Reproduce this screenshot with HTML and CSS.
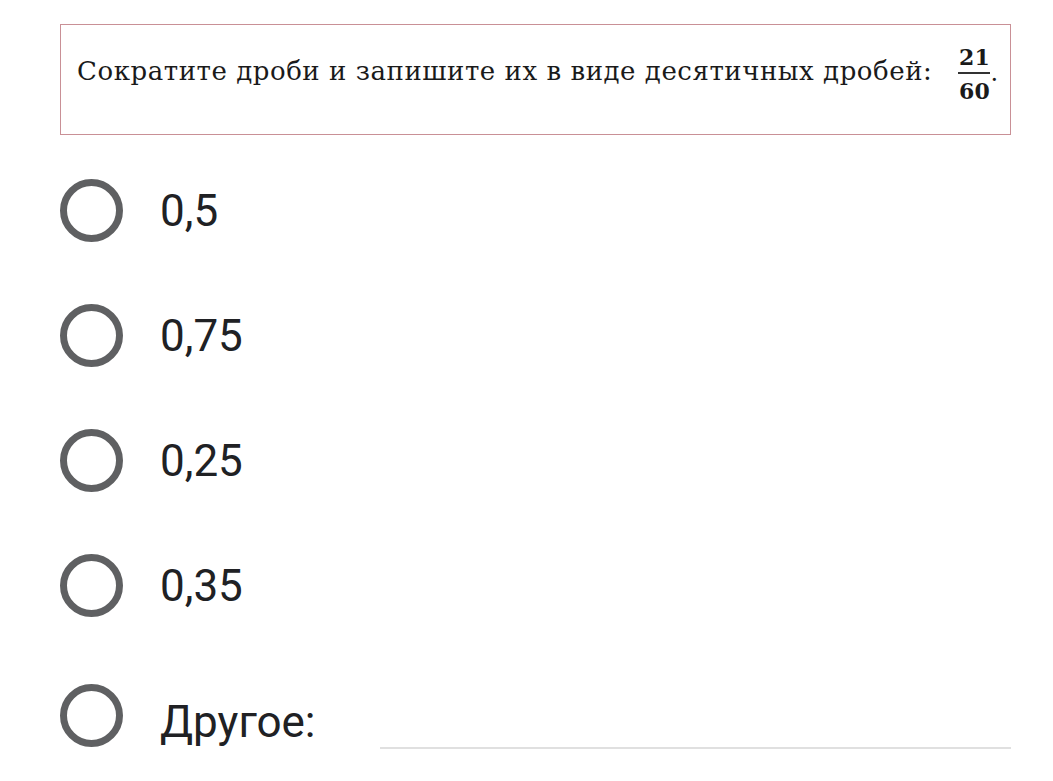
FILE: index.html
```html
<!DOCTYPE html>
<html lang="ru">
<head>
<meta charset="utf-8">
<link rel="stylesheet" href="styles.css">
</head>
<body>
<div class="question">
  <span class="qtext">Сократите дроби и запишите их в виде десятичных дробей:</span>
  <span class="frac"><span class="num">21</span><span class="bar"></span><span class="den">60</span></span><span class="dot">.</span>
</div>
<div class="options">
  <div class="option"><span class="radio"></span><span class="label">0,5</span></div>
  <div class="option"><span class="radio"></span><span class="label">0,75</span></div>
  <div class="option"><span class="radio"></span><span class="label">0,25</span></div>
  <div class="option"><span class="radio"></span><span class="label">0,35</span></div>
  <div class="option other"><span class="radio"></span><span class="label">Другое:</span><span class="other-line"></span></div>
</div>
</body>
</html>
```
FILE: styles.css
```css
html, body {
  margin: 0;
  padding: 0;
  background: #ffffff;
}
body {
  width: 1053px;
  height: 781px;
  overflow: hidden;
}
.question {
  box-sizing: border-box;
  margin: 24px 0 0 60px;
  width: 951px;
  height: 111px;
  border: 1px solid #c99096;
  display: flex;
  align-items: flex-start;
  padding: 20px 0 0 16px;
}
.qtext {
  font-family: "DejaVu Serif", serif;
  font-size: 26px;
  line-height: 52px;
  letter-spacing: 0.55px;
  color: #1a1a1a;
}
.frac {
  display: inline-flex;
  flex-direction: column;
  align-items: center;
  margin-left: 26px;
  font-family: "DejaVu Serif", serif;
  font-weight: bold;
  font-size: 22px;
  line-height: 24px;
  color: #1a1a1a;
}
.bar {
  width: 32px;
  height: 2px;
  background: #333;
  margin: 3px 0 5px;
}
.dot {
  font-family: "DejaVu Serif", serif;
  font-size: 24px;
  line-height: 56px;
  color: #1a1a1a;
}
.options {
  margin: 13px 0 0 60px;
  display: flex;
  flex-direction: column;
}
.option {
  height: 125px;
  display: flex;
  align-items: center;
}
.option.other {
  margin-top: 5px;
  height: 125px;
}
.radio {
  box-sizing: border-box;
  width: 63px;
  height: 63px;
  border: 7px solid #5f6062;
  border-radius: 50%;
  flex: none;
}
.label {
  margin-left: 37px;
  font-family: Roboto, "Noto Sans", sans-serif;
  font-size: 44px;
  color: #202124;
}
.other .label {
  margin-top: 12px;
}
.other-line {
  flex: 1;
  height: 2px;
  background: #e0e0e0;
  margin: 64px 42px 0 64px;
}
```
